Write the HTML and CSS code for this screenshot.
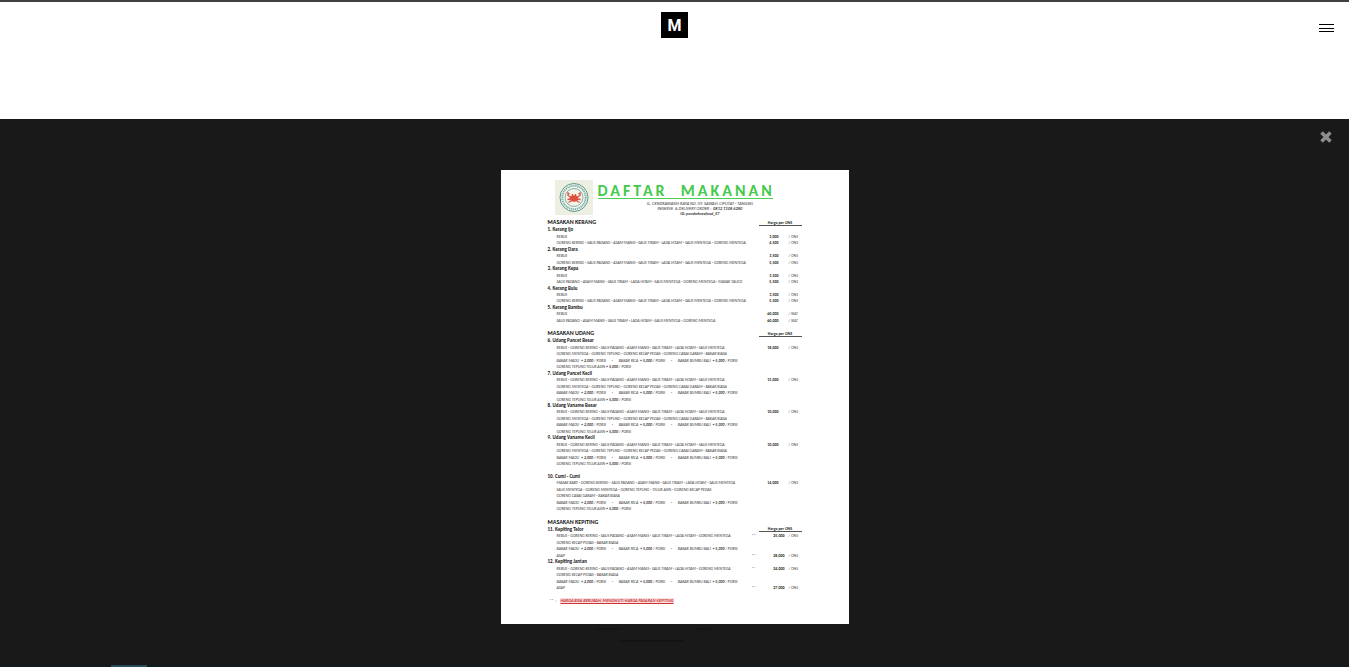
FILE: index.html
```html
<!DOCTYPE html>
<html lang="id">
<head>
<meta charset="utf-8">
<meta name="viewport" content="width=device-width, initial-scale=1">
<title>Daftar Makanan</title>
<link rel="stylesheet" href="styles.css">
</head>
<body>
<header class="topbar">
  <a class="logo" href="#">M</a>
  <button class="menu" aria-label="Menu"><span></span><span></span><span></span></button>
</header>
<main class="viewer">
  <button class="close" aria-label="Close">
    <svg viewBox="0 0 12 12" width="12" height="12"><path d="M2.8 2.8 9.2 9.2M9.2 2.8 2.8 9.2" stroke="currentColor" stroke-width="3.6" stroke-linecap="square"/></svg>
  </button>
  <article class="sheet">
    <header class="masthead">
      <svg class="seal" viewBox="0 0 38 35" aria-hidden="true">
        <rect width="38" height="35" fill="#edefe3"/>
        <circle cx="19" cy="17.500" r="14" fill="#f7f8f1" stroke="#5b9a8c" stroke-width="1"/>
        <circle cx="19" cy="17.500" r="11.700" fill="none" stroke="#7fb0a5" stroke-width="2" stroke-dasharray="1.300 .7"/>
        <circle cx="19" cy="17.500" r="9" fill="#f4f3ea" stroke="#62a092" stroke-width=".8"/>
        <ellipse cx="19" cy="18.500" rx="4.300" ry="3.200" fill="#dc5240"/>
        <path d="M15.500 17 13 15.500V13l1.500 1M22.500 17l2.500-1.500V13l-1.500 1M15.500 19l-3 .5M22.500 19l3 .5M16 21l-2.500 1.500M22 21l2.500 1.500M17.500 16v-2M20.500 16v-2" fill="none" stroke="#dc5240" stroke-width="1.300"/>
      </svg>
      <div class="heading">
        <h1>DAFTAR&nbsp; MAKANAN</h1>
        <p>JL. CENDRAWASIH RAYA NO. 09, SAWAH, CIPUTAT - TANGSEL</p>
        <p>RESERVE &nbsp;&amp; DELIVERY ORDER : &nbsp;<b>0812 1108 6280</b></p>
        <p><b>IG: posokekseafood_57</b></p>
      </div>
    </header>
    <table class="prices">
      <tbody>
      <tr class="section"><th>MASAKAN KERANG</th><td class="unit-head">Harga per ONS</td></tr>
      <tr class="name"><th>1. Kerang Ijo</th></tr>
      <tr><td class="dish">REBUS</td><td class="price">3,000</td><td class="unit">/ ONS</td></tr>
      <tr><td class="dish">GORENG KERING - SAUS PADANG - ASAM MANIS - SAUS TIRAM - LADA HITAM - SAUS MENTEGA - GORENG MENTEGA</td><td class="price">4,500</td><td class="unit">/ ONS</td></tr>
      <tr class="name"><th>2. Kerang Dara</th></tr>
      <tr><td class="dish">REBUS</td><td class="price">3,500</td><td class="unit">/ ONS</td></tr>
      <tr><td class="dish">GORENG KERING - SAUS PADANG - ASAM MANIS - SAUS TIRAM - LADA HITAM - SAUS MENTEGA - GORENG MENTEGA</td><td class="price">5,500</td><td class="unit">/ ONS</td></tr>
      <tr class="name"><th>3. Kerang Kepa</th></tr>
      <tr><td class="dish">REBUS</td><td class="price">3,500</td><td class="unit">/ ONS</td></tr>
      <tr><td class="dish">SAUS PADANG - ASAM MANIS - SAUS TIRAM - LADA HITAM - SAUS MENTEGA - GORENG MENTEGA - MASAK TAUCO</td><td class="price">5,500</td><td class="unit">/ ONS</td></tr>
      <tr class="name"><th>4. Kerang Bulu</th></tr>
      <tr><td class="dish">REBUS</td><td class="price">3,500</td><td class="unit">/ ONS</td></tr>
      <tr><td class="dish">GORENG KERING - SAUS PADANG - ASAM MANIS - SAUS TIRAM - LADA HITAM - SAUS MENTEGA - GORENG MENTEGA</td><td class="price">5,500</td><td class="unit">/ ONS</td></tr>
      <tr class="name"><th>5. Kerang Bambu</th></tr>
      <tr><td class="dish">REBUS</td><td class="price">60,000</td><td class="unit">/ IKAT</td></tr>
      <tr><td class="dish">SAUS PADANG - ASAM MANIS - SAUS TIRAM - LADA HITAM - SAUS MENTEGA - GORENG MENTEGA</td><td class="price">60,000</td><td class="unit">/ IKAT</td></tr>
      <tr class="blank"><td></td></tr>
      <tr class="section"><th>MASAKAN UDANG</th><td class="unit-head">Harga per ONS</td></tr>
      <tr class="name"><th>6. Udang Pancet Besar</th></tr>
      <tr><td class="dish">REBUS - GORENG KERING - SAUS PADANG - ASAM MANIS - SAUS TIRAM - LADA HITAM - SAUS MENTEGA</td><td class="price">18,000</td><td class="unit">/ ONS</td></tr>
      <tr><td class="dish">GORENG MENTEGA - GORENG TEPUNG - GORENG KECAP PEDAS - GORENG CABAI GARAM - BAKAR BIASA</td></tr>
      <tr><td class="dish extras"><span>BAKAR MADU &nbsp;<b>+ 2,000</b> / PORSI</span><span>-</span><span>BAKAR RICA &nbsp;<b>+ 5,000</b> / PORSI</span><span>-</span><span>BAKAR BUMBU BALI &nbsp;<b>+ 5,000</b> / PORSI</span></td></tr>
      <tr><td class="dish">GORENG TEPUNG TELUR ASIN <b>+ 5,000</b> / PORSI</td></tr>
      <tr class="name"><th>7. Udang Pancet Kecil</th></tr>
      <tr><td class="dish">REBUS - GORENG KERING - SAUS PADANG - ASAM MANIS - SAUS TIRAM - LADA HITAM - SAUS MENTEGA</td><td class="price">15,000</td><td class="unit">/ ONS</td></tr>
      <tr><td class="dish">GORENG MENTEGA - GORENG TEPUNG - GORENG KECAP PEDAS - GORENG CABAI GARAM - BAKAR BIASA</td></tr>
      <tr><td class="dish extras"><span>BAKAR MADU &nbsp;<b>+ 2,000</b> / PORSI</span><span>-</span><span>BAKAR RICA &nbsp;<b>+ 5,000</b> / PORSI</span><span>-</span><span>BAKAR BUMBU BALI &nbsp;<b>+ 5,000</b> / PORSI</span></td></tr>
      <tr><td class="dish">GORENG TEPUNG TELUR ASIN <b>+ 5,000</b> / PORSI</td></tr>
      <tr class="name"><th>8. Udang Vaname Besar</th></tr>
      <tr><td class="dish">REBUS - GORENG KERING - SAUS PADANG - ASAM MANIS - SAUS TIRAM - LADA HITAM - SAUS MENTEGA</td><td class="price">10,000</td><td class="unit">/ ONS</td></tr>
      <tr><td class="dish">GORENG MENTEGA - GORENG TEPUNG - GORENG KECAP PEDAS - GORENG CABAI GARAM - BAKAR BIASA</td></tr>
      <tr><td class="dish extras"><span>BAKAR MADU &nbsp;<b>+ 2,000</b> / PORSI</span><span>-</span><span>BAKAR RICA &nbsp;<b>+ 5,000</b> / PORSI</span><span>-</span><span>BAKAR BUMBU BALI &nbsp;<b>+ 5,000</b> / PORSI</span></td></tr>
      <tr><td class="dish">GORENG TEPUNG TELUR ASIN <b>+ 5,000</b> / PORSI</td></tr>
      <tr class="name"><th>9. Udang Vaname Kecil</th></tr>
      <tr><td class="dish">REBUS - GORENG KERING - SAUS PADANG - ASAM MANIS - SAUS TIRAM - LADA HITAM - SAUS MENTEGA</td><td class="price">10,000</td><td class="unit">/ ONS</td></tr>
      <tr><td class="dish">GORENG MENTEGA - GORENG TEPUNG - GORENG KECAP PEDAS - GORENG CABAI GARAM - BAKAR BIASA</td></tr>
      <tr><td class="dish extras"><span>BAKAR MADU &nbsp;<b>+ 2,000</b> / PORSI</span><span>-</span><span>BAKAR RICA &nbsp;<b>+ 5,000</b> / PORSI</span><span>-</span><span>BAKAR BUMBU BALI &nbsp;<b>+ 5,000</b> / PORSI</span></td></tr>
      <tr><td class="dish">GORENG TEPUNG TELUR ASIN <b>+ 5,000</b> / PORSI</td></tr>
      <tr class="blank"><td></td></tr>
      <tr class="name"><th>10. Cumi - Cumi</th></tr>
      <tr><td class="dish">MASAK BABY - GORENG KERING - SAUS PADANG - ASAM MANIS - SAUS TIRAM - LADA HITAM - SAUS MENTEGA</td><td class="price">14,000</td><td class="unit">/ ONS</td></tr>
      <tr><td class="dish">SAUS MENTEGA - GORENG MENTEGA - GORENG TEPUNG - TELUR ASIN - GORENG KECAP PEDAS</td></tr>
      <tr><td class="dish">GORENG CABAI GARAM - BAKAR BIASA</td></tr>
      <tr><td class="dish extras"><span>BAKAR MADU &nbsp;<b>+ 2,000</b> / PORSI</span><span>-</span><span>BAKAR RICA &nbsp;<b>+ 5,000</b> / PORSI</span><span>-</span><span>BAKAR BUMBU BALI &nbsp;<b>+ 5,000</b> / PORSI</span></td></tr>
      <tr><td class="dish">GORENG TEPUNG TELUR ASIN <b>+ 5,000</b> / PORSI</td></tr>
      <tr class="blank"><td></td></tr>
      <tr class="section"><th>MASAKAN KEPITING</th></tr>
      <tr class="name"><th>11. Kepiting Telor</th><td class="unit-head">Harga per ONS</td></tr>
      <tr class="crab"><td class="dish">REBUS - GORENG KERING - SAUS PADANG - ASAM MANIS - SAUS TIRAM - LADA HITAM - GORENG MENTEGA</td><td class="mark">**</td><td class="price">25,000</td><td class="unit">/ ONS</td></tr>
      <tr><td class="dish">GORENG KECAP PEDAS - BAKAR BIASA</td></tr>
      <tr><td class="dish extras"><span>BAKAR MADU &nbsp;<b>+ 2,000</b> / PORSI</span><span>-</span><span>BAKAR RICA &nbsp;<b>+ 5,000</b> / PORSI</span><span>-</span><span>BAKAR BUMBU BALI &nbsp;<b>+ 5,000</b> / PORSI</span></td></tr>
      <tr class="crab"><td class="dish">ASAP</td><td class="mark">**</td><td class="price">28,000</td><td class="unit">/ ONS</td></tr>
      <tr class="name"><th>12. Kepiting Jantan</th></tr>
      <tr class="crab"><td class="dish">REBUS - GORENG KERING - SAUS PADANG - ASAM MANIS - SAUS TIRAM - LADA HITAM - GORENG MENTEGA</td><td class="mark">**</td><td class="price">24,000</td><td class="unit">/ ONS</td></tr>
      <tr><td class="dish">GORENG KECAP PEDAS - BAKAR BIASA</td></tr>
      <tr><td class="dish extras"><span>BAKAR MADU &nbsp;<b>+ 2,000</b> / PORSI</span><span>-</span><span>BAKAR RICA &nbsp;<b>+ 5,000</b> / PORSI</span><span>-</span><span>BAKAR BUMBU BALI &nbsp;<b>+ 5,000</b> / PORSI</span></td></tr>
      <tr class="crab"><td class="dish">ASAP</td><td class="mark">**</td><td class="price">27,000</td><td class="unit">/ ONS</td></tr>
      <tr class="blank"><td></td></tr>
      <tr class="note"><td>** &nbsp;:</td><td class="warning">HARGA BISA BERUBAH, MENGIKUTI HARGA PASARAN KEPITING</td></tr>
      </tbody>
    </table>
  </article>
  <div class="behind" aria-hidden="true">
    <i></i><i class="short"></i><i class="line"></i>
  </div>
</main>
<footer class="strip"><span></span></footer>
</body>
</html>
```

FILE: styles.css
```css
* { box-sizing: border-box; }
body {
  margin: 0;
  min-height: 100vh;
  display: flex;
  flex-direction: column;
  background: #fff;
  font-family: Carlito, "Liberation Sans Narrow", Lato, sans-serif;
}
button { border: 0; padding: 0; background: none; cursor: pointer; }
.topbar {
  display: grid;
  grid-template-columns: 1fr auto 1fr;
  align-items: start;
  padding: 10px 15px 0;
  height: 119px;
  border-top: 2px solid #403f41;
}
.logo {
  grid-column: 2;
  width: 27px;
  height: 26px;
  background: #000;
  color: #fff;
  font: bold 16px/27px Roboto, sans-serif;
  text-align: center;
  text-decoration: none;
}
.menu {
  justify-self: end;
  display: flex;
  flex-direction: column;
  justify-content: space-between;
  width: 15px;
  height: 8px;
  margin-top: 12px;
}
.menu span { width: 15px; height: 1px; background: #000; }
.viewer {
  position: relative;
  flex: 1;
  padding: 51px 16px 20px;
  background: #19191a;
}
.close {
  position: absolute;
  top: 12px;
  right: 17px;
  width: 12px;
  height: 12px;
  color: #8c8c8d;
}
.close svg { display: block; }
.sheet {
  width: 348px;
  margin: 0 auto;
  padding: 10px 47px 20px;
  background: #fff;
  color: #222;
  font-size: 4px;
  line-height: 5px;
  white-space: nowrap;
}
.masthead { display: flex; gap: 5px; padding-left: 7px; height: 39px; }
.seal { width: 38px; height: 35px; }
.heading { width: 175px; text-align: center; font-style: italic; color: #333; }
.heading h1 {
  margin: 4px 0 2px;
  border-bottom: 1px solid #4fce54;
  color: #43c94b;
  font-size: 16px;
  font-style: normal;
  line-height: 14px;
  letter-spacing: 3px;
  text-align: left;
}
.heading p { margin: 0; padding-left: 30px; font-family: Lato, sans-serif; }
.prices { display: block; }
.prices tbody { display: flex; flex-direction: column; height: 385px; }
.prices tr { flex: 10 1 0; min-height: 0; display: flex; align-items: center; }
.prices tr.section { flex-grow: 12; }
.prices td, .prices th { padding: 0; text-align: left; }
.prices th { flex: 1; font-size: 5px; color: #111; }
.prices .section th { font-size: 6px; }
.prices .dish { flex: 1; width: 0; padding-left: 9px; font-style: italic; color: #333; }
.prices .extras { display: flex; justify-content: space-between; padding-right: 64px; }
.prices .price { width: 12px; margin-right: 10px; font-weight: bold; text-align: right; }
.prices .unit { width: 13px; color: #555; }
.prices .crab .price { width: 16px; margin-right: 4px; }
.prices .mark { width: 17px; }
.prices .unit-head { width: 43px; border-bottom: 1px solid #555; text-align: center; font-weight: bold; }
.note { gap: 4px; padding-left: 2px; }
.warning {
  background: #f8dede;
  color: #c33;
  font-family: Lato, sans-serif;
  font-weight: bold;
  font-style: italic;
  text-decoration: underline;
}
/* Page content dimmed almost to black under the overlay */
.behind {
  display: grid;
  grid-template-columns: 24px 1fr 15px;
  gap: 10px 0;
  width: 156px;
  margin: 4px auto 0;
  padding-right: 42px;
}
.behind i { height: 2px; background: #141415; }
.behind .short { grid-column: 3; }
.behind .line { grid-column: 1 / 3; margin: 0 12px 0 22px; }
.strip { height: 2px; padding-left: 111px; background: #101a21; }
.strip span { display: block; width: 36px; height: 2px; background: #294b59; }
```
